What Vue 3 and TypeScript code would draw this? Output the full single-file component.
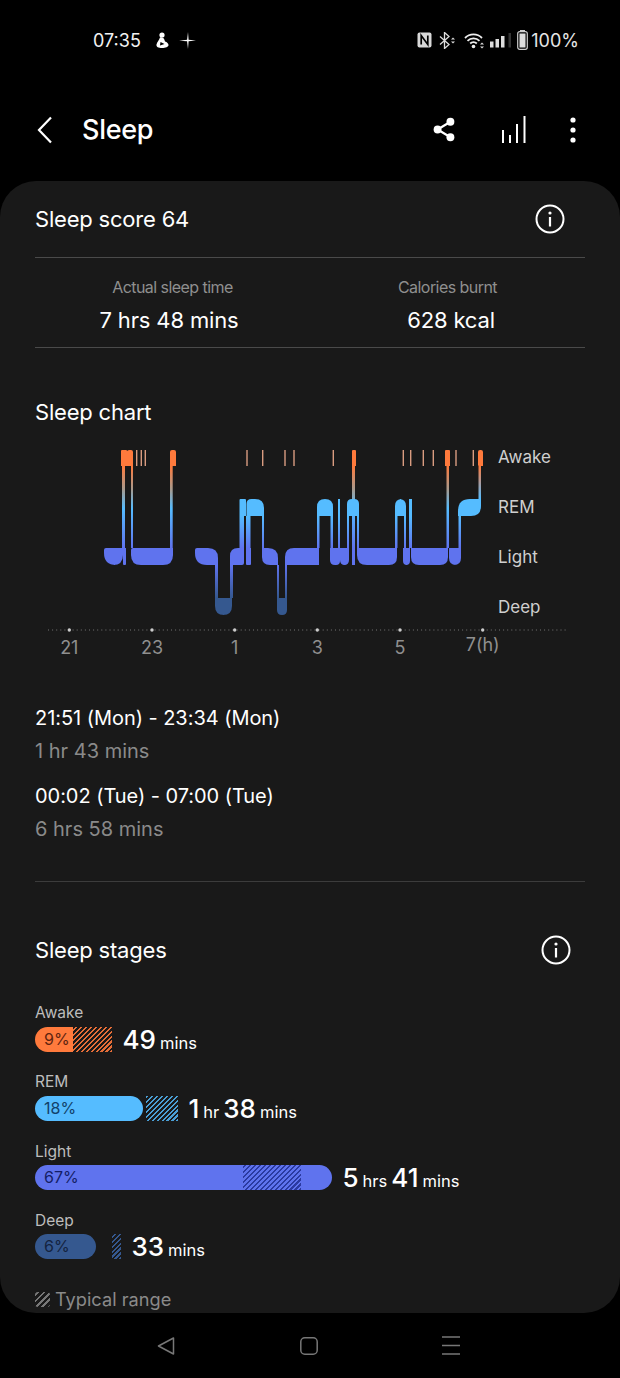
<script setup lang="ts">
type Stage = 'awake' | 'rem' | 'light' | 'deep'

const bands: Record<Stage, [number, number]> = {
  awake: [450, 466],
  rem: [499, 516],
  light: [548, 565],
  deep: [598, 615]
}

const stageColor: Record<Stage, string> = {
  awake: '#ff7a3c',
  rem: '#55bcff',
  light: '#5f73ee',
  deep: '#35588f'
}

// x, x2, stage, corner radii [tl, tr, br, bl]
const rawBlocks: [number, number, Stage, number[]][] = [
  [104, 123, 'light', [2, 0, 10, 12]],
  [123, 126, 'light', [0, 0, 1, 1]],
  [131, 173, 'light', [2, 0, 10, 10]],
  [195, 218, 'light', [2, 10, 0, 12]],
  [215, 232, 'deep', [0, 0, 9, 9]],
  [230, 244, 'light', [8, 0, 2, 0]],
  [246, 251, 'light', [0, 0, 1, 1]],
  [262, 278, 'light', [0, 10, 0, 8]],
  [277, 287, 'deep', [0, 0, 5, 5]],
  [285, 319, 'light', [9, 0, 0, 0]],
  [330, 340, 'light', [0, 0, 4, 5]],
  [340, 349, 'light', [0, 0, 5, 5]],
  [352, 355, 'light', [0, 0, 0, 0]],
  [357, 397, 'light', [0, 0, 8, 10]],
  [403, 410, 'light', [0, 0, 4, 4]],
  [411, 448, 'light', [0, 0, 8, 8]],
  [449, 461, 'light', [0, 0, 7, 7]],
  [239.5, 246, 'rem', [1, 1, 0, 0]],
  [246.5, 264, 'rem', [5, 9, 0, 0]],
  [317, 333, 'rem', [8, 8, 0, 0]],
  [338, 340, 'rem', [0, 0, 0, 0]],
  [347, 359, 'rem', [5, 5, 0, 0]],
  [395, 406, 'rem', [7, 7, 0, 0]],
  [409, 412, 'rem', [0, 0, 0, 0]],
  [458, 481, 'rem', [12, 0, 10, 0]],
  [121, 127, 'awake', [1, 1, 0, 0]],
  [126.5, 133, 'awake', [3, 2, 0, 0]],
  [170, 176, 'awake', [2, 2, 0, 0]],
  [352, 356, 'awake', [1, 1, 0, 0]],
  [445, 450, 'awake', [1, 1, 0, 0]],
  [478, 483, 'awake', [2, 2, 0, 1]]
]

function blockPath(x: number, x2: number, y: number, y2: number, r: number[]) {
  const [tl, tr, br, bl] = r
  return `M${x + tl} ${y}H${x2 - tr}Q${x2} ${y} ${x2} ${y + tr}V${y2 - br}Q${x2} ${y2} ${x2 - br} ${y2}H${x + bl}Q${x} ${y2} ${x} ${y2 - bl}V${y + tl}Q${x} ${y} ${x + tl} ${y}Z`
}

const blocks = rawBlocks.map(([x, x2, stage, r]) => ({
  d: blockPath(x, x2, bands[stage][0], bands[stage][1], r),
  fill: stageColor[stage]
}))

// x, x2, gradient name
const rawLinks: [number, number, string][] = [
  [122, 125, 'awakeLight'],
  [131, 133, 'awakeLight'],
  [170, 172.7, 'awakeLight'],
  [352, 355, 'awakeLight'],
  [446.5, 449, 'awakeLight'],
  [478.5, 481, 'awakeRem'],
  [239.5, 244, 'remLight'],
  [246, 250.5, 'remLight'],
  [262, 264, 'remLight'],
  [317, 319.5, 'remLight'],
  [330.5, 333, 'remLight'],
  [338, 340, 'remLight'],
  [347, 349, 'remLight'],
  [357, 359, 'remLight'],
  [395, 397.5, 'remLight'],
  [404, 406, 'remLight'],
  [409, 412, 'remLight'],
  [458.5, 461, 'remLight'],
  [215, 218, 'lightDeep'],
  [230, 233, 'lightDeep'],
  [277, 279, 'lightDeep'],
  [285, 287, 'lightDeep']
]

const linkSpan: Record<string, [number, number]> = {
  awakeLight: [466, 548],
  awakeRem: [466, 499],
  remLight: [516, 548],
  lightDeep: [565, 598]
}

const links = rawLinks.map(([x, x2, name]) => ({
  x,
  width: x2 - x,
  y: linkSpan[name][0],
  height: linkSpan[name][1] - linkSpan[name][0],
  fill: `url(#${name})`
}))

const ticks = [136.7, 141.3, 145.3, 247, 262.7, 285, 294, 333.3, 403.3, 410.7, 423.3, 433.3, 456, 473.3]

const stageLabels = [
  { text: 'Awake', y: 457 },
  { text: 'REM', y: 507 },
  { text: 'Light', y: 557 },
  { text: 'Deep', y: 607 }
]

const axis = [
  { x: 69.3, y: 654, text: '21' },
  { x: 152, y: 654, text: '23' },
  { x: 234.7, y: 654, text: '1' },
  { x: 317.3, y: 654, text: '3' },
  { x: 400, y: 654, text: '5' },
  { x: 482.7, y: 651, text: '7(h)' }
]

const sessions = [
  { range: '21:51 (Mon) - 23:34 (Mon)', length: '1 hr 43 mins' },
  { range: '00:02 (Tue) - 07:00 (Tue)', length: '6 hrs 58 mins' }
]

interface Row {
  name: string
  cls: string
  pct: string
  fill: number
  hatchAt: number
  hatch: number
  value: [string, string][]
}

const rows: Row[] = [
  { name: 'Awake', cls: 'awake', pct: '9%', fill: 38, hatchAt: 38, hatch: 39, value: [['49', 'mins']] },
  { name: 'REM', cls: 'rem', pct: '18%', fill: 108, hatchAt: 111, hatch: 32, value: [['1', 'hr'], ['38', 'mins']] },
  { name: 'Light', cls: 'light', pct: '67%', fill: 297, hatchAt: 208, hatch: 58, value: [['5', 'hrs'], ['41', 'mins']] },
  { name: 'Deep', cls: 'deep', pct: '6%', fill: 61, hatchAt: 77, hatch: 9, value: [['33', 'mins']] }
]
</script>

<template>
  <div class="phone">
    <div class="status">
      <div class="status-left">
        <span class="clock">07:35</span>
        <svg class="glyph" width="13" height="16" viewBox="0 0 13 16">
          <circle cx="6" cy="3" r="2.600" fill="#fff" />
          <path d="M4 5.500c2-.5 4 .5 4.500 2.500l.5 1.500c2 .5 3.500 2 3.500 3.500 0 2-3 3-6.500 3S0 15 .5 12.500C1 10 3 8.500 4 5.500z" fill="#fff" />
          <path d="M4.500 10l4 2-4.500 1.500z" fill="#000" />
        </svg>
        <svg class="glyph spark" width="17" height="17" viewBox="0 0 17 17">
          <path d="M9 0l.6 7.800 7.400.7-7.400.7L9 17l-.9-7.800L0 8.700l8.100-.9z" fill="#fff" />
        </svg>
      </div>
      <div class="status-right">
        <svg width="15" height="16" viewBox="0 0 15 16">
          <rect x="0.500" y="0.500" width="14" height="15" rx="2" fill="#d8d8d8" />
          <path d="M4.200 12.500V3.500L10.800 12.500V3.500" fill="none" stroke="#000" stroke-width="1.700" />
        </svg>
        <svg class="bt" width="16" height="17" viewBox="0 0 16 17">
          <path d="M1 4.500l9 8-4.500 4V.5l4.500 4-9 8" fill="none" stroke="#ddd" stroke-width="1.300" />
          <path d="M12 7.500h4l-2-2zM12 9.500h4l-2 2z" fill="#ddd" />
        </svg>
        <svg class="wifi" width="21" height="17" viewBox="0 0 21 17">
          <path d="M1 6a12 12 0 0 1 17 0M3.500 8.800a8.500 8.500 0 0 1 12 0M6.200 11.500a4.600 4.600 0 0 1 6.600 0" fill="none" stroke="#eee" stroke-width="1.800" />
          <circle cx="9.500" cy="14.500" r="1.800" fill="#eee" />
          <path d="M16 12.500h4l-2-2zM16 14.500h4l-2 2z" fill="#ddd" />
        </svg>
        <svg class="signal" width="21" height="15" viewBox="0 0 21 15">
          <rect x="0" y="8.500" width="3.500" height="6" fill="#ddd" />
          <rect x="5.500" y="6" width="3.500" height="8.500" fill="#ddd" />
          <rect x="11" y="3" width="3.500" height="11.500" fill="#ddd" />
          <rect x="18.500" y="0" width="2.500" height="14.500" fill="#333" />
        </svg>
        <svg class="battery" width="11" height="20" viewBox="0 0 11 20">
          <rect x="3" y="0" width="5" height="2" fill="#ccc" />
          <rect x="0.700" y="1.700" width="9.600" height="17.600" rx="2" fill="none" stroke="#ccc" stroke-width="1.200" />
          <rect x="2.500" y="3.500" width="6" height="14" fill="#ddd" />
        </svg>
        <span class="battery-text">100%</span>
      </div>
    </div>

    <header class="topbar">
      <svg class="back" width="16" height="28" viewBox="0 0 16 28">
        <path d="M14 1.500L2 14l12 12.500" fill="none" stroke="#fff" stroke-width="2.200" />
      </svg>
      <h1>Sleep</h1>
      <div class="actions">
        <svg class="share" width="22" height="25" viewBox="0 0 24 26">
          <path d="M19 4.500L5 13l14 8.500" fill="none" stroke="#fff" stroke-width="2.400" />
          <circle cx="19" cy="4.500" r="4.300" fill="#fff" />
          <circle cx="5" cy="13" r="4.300" fill="#fff" />
          <circle cx="19" cy="21.500" r="4.300" fill="#fff" />
        </svg>
        <svg class="bars" width="24" height="27" viewBox="0 0 24 27">
          <path d="M1 27V14M8 27V19M15 27V8M22.500 27V0" stroke="#fff" stroke-width="2" fill="none" />
        </svg>
        <svg width="6" height="26" viewBox="0 0 6 26">
          <circle cx="3" cy="3" r="2.600" fill="#fff" />
          <circle cx="3" cy="13" r="2.600" fill="#fff" />
          <circle cx="3" cy="23" r="2.600" fill="#fff" />
        </svg>
      </div>
    </header>

    <main class="card">
      <section class="score">
        <h2>Sleep score 64</h2>
        <svg class="info" width="30" height="30" viewBox="0 0 30 30">
          <circle cx="15" cy="15" r="13.500" fill="none" stroke="#fff" stroke-width="2" />
          <circle cx="15" cy="9" r="1.600" fill="#fff" />
          <path d="M15 13v9.500" stroke="#fff" stroke-width="2.200" />
        </svg>
      </section>

      <section class="stats">
        <div class="stat">
          <span class="stat-label">Actual sleep time</span>
          <span class="stat-value">7 hrs 48 mins</span>
        </div>
        <div class="stat">
          <span class="stat-label">Calories burnt</span>
          <span class="stat-value">628 kcal</span>
        </div>
      </section>

      <h2 class="chart-title">Sleep chart</h2>

      <svg class="chart" width="620" height="225" viewBox="0 435 620 225">
        <defs>
          <linearGradient id="awakeLight" gradientUnits="userSpaceOnUse" x1="0" y1="466" x2="0" y2="548">
            <stop offset="0" stop-color="#ff7a3c" />
            <stop offset="0.28" stop-color="#a99a8c" />
            <stop offset="0.52" stop-color="#55bcff" />
            <stop offset="1" stop-color="#5f73ee" />
          </linearGradient>
          <linearGradient id="awakeRem" gradientUnits="userSpaceOnUse" x1="0" y1="466" x2="0" y2="499">
            <stop offset="0" stop-color="#ff7a3c" />
            <stop offset="1" stop-color="#55bcff" />
          </linearGradient>
          <linearGradient id="remLight" gradientUnits="userSpaceOnUse" x1="0" y1="516" x2="0" y2="548">
            <stop offset="0" stop-color="#55bcff" />
            <stop offset="1" stop-color="#5f73ee" />
          </linearGradient>
          <linearGradient id="lightDeep" gradientUnits="userSpaceOnUse" x1="0" y1="565" x2="0" y2="598">
            <stop offset="0" stop-color="#5f73ee" />
            <stop offset="1" stop-color="#35588f" />
          </linearGradient>
        </defs>

        <rect v-for="t in ticks" :key="t" :x="t - 0.7" y="450" width="1.400" height="16" fill="#d99c80" />
        <rect v-for="(l, i) in links" :key="i" :x="l.x" :y="l.y" :width="l.width" :height="l.height" :fill="l.fill" />
        <path v-for="(b, i) in blocks" :key="i" :d="b.d" :fill="b.fill" />

        <line x1="48" y1="630" x2="568" y2="630" stroke="#777" stroke-width="1" stroke-dasharray="1 3.100" />
        <template v-for="a in axis" :key="a.x">
          <circle :cx="a.x" cy="630" r="1.700" fill="#ccc" />
          <text :x="a.x" :y="a.y" text-anchor="middle" class="axis-text">{{ a.text }}</text>
        </template>
        <text v-for="s in stageLabels" :key="s.text" x="498" :y="s.y + 6" class="stage-text">{{ s.text }}</text>
      </svg>

      <section class="sessions">
        <div v-for="s in sessions" :key="s.range" class="session">
          <div class="range">{{ s.range }}</div>
          <div class="length">{{ s.length }}</div>
        </div>
      </section>

      <section class="stages">
        <div class="stages-head">
          <h2>Sleep stages</h2>
          <svg class="info" width="30" height="30" viewBox="0 0 30 30">
            <circle cx="15" cy="15" r="13.500" fill="none" stroke="#fff" stroke-width="2" />
            <circle cx="15" cy="9" r="1.600" fill="#fff" />
            <path d="M15 13v9.500" stroke="#fff" stroke-width="2.200" />
          </svg>
        </div>

        <div v-for="r in rows" :key="r.name" class="row" :class="r.cls">
          <div class="row-name">{{ r.name }}</div>
          <div class="row-line">
            <div class="track" :style="{ width: Math.max(r.fill, r.hatchAt + r.hatch) + 'px' }">
              <div class="fill" :style="{ width: r.fill + 'px' }">{{ r.pct }}</div>
              <div class="hatch" :style="{ left: r.hatchAt + 'px', width: r.hatch + 'px' }"></div>
            </div>
            <div class="value">
              <template v-for="v in r.value" :key="v[1]">
                <b>{{ v[0] }}</b><span>{{ v[1] }}</span>
              </template>
            </div>
          </div>
        </div>

        <div class="legend">
          <span class="legend-mark"></span>
          <span>Typical range</span>
        </div>
      </section>
    </main>

    <nav class="navbar">
      <svg width="18" height="18" viewBox="0 0 18 18">
        <path d="M16.500 1L1.500 9l15 8z" fill="none" stroke="#777" stroke-width="1.500" stroke-linejoin="round" />
      </svg>
      <svg width="18" height="18" viewBox="0 0 18 18">
        <rect x="0.800" y="0.800" width="16.400" height="16.400" rx="4" fill="none" stroke="#777" stroke-width="1.500" />
      </svg>
      <svg width="18" height="19" viewBox="0 0 18 19">
        <path d="M0 1h18M0 9.500h18M0 18h18" stroke="#777" stroke-width="1.500" />
      </svg>
    </nav>
  </div>
</template>

<style>
html,
body {
  margin: 0;
  background: #000;
}
</style>

<style scoped>
.phone {
  width: 620px;
  height: 1378px;
  overflow: hidden;
  background: #000;
  color: #fff;
  font-family: Inter, 'Noto Sans', sans-serif;
  display: flex;
  flex-direction: column;
}

.status {
  height: 80px;
  flex: none;
  padding: 0 41px 0 93px;
  box-sizing: border-box;
  display: flex;
  align-items: center;
  justify-content: space-between;
}

.status-left,
.status-right {
  display: flex;
  align-items: center;
}

.clock {
  font-size: 18px;
  color: #f2f2f2;
}

.glyph {
  margin-left: 15px;
}

.spark {
  margin-left: 10px;
}

.bt {
  margin-left: 7px;
}

.wifi {
  margin-left: 9px;
}

.signal {
  margin-left: 5px;
}

.battery {
  margin-left: 6px;
}

.battery-text {
  font-size: 18px;
  color: #e6e6e6;
  margin-left: 3px;
}

.topbar {
  height: 101px;
  flex: none;
  display: flex;
  align-items: center;
  padding: 0 44px 2px 37px;
  box-sizing: border-box;
}

.back {
  margin-right: 29px;
}

h1 {
  margin: 0;
  font-size: 27px;
  font-weight: 500;
  letter-spacing: -0.3px;
}

.actions {
  margin-left: auto;
  display: flex;
  align-items: center;
}

.share {
  margin-right: 47px;
}

.bars {
  margin-right: 44px;
}

.card {
  height: 1132px;
  flex: none;
  background: #191919;
  border-radius: 36px;
  overflow: hidden;
}

h2 {
  margin: 0;
  font-size: 22px;
  font-weight: 400;
  letter-spacing: -0.2px;
}

.score {
  height: 76px;
  margin: 0 35px;
  display: flex;
  align-items: center;
  justify-content: space-between;
  padding: 0 20px 0 0;
  border-bottom: 1px solid #4a4a4a;
}

.stats {
  height: 89px;
  margin: 0 35px;
  border-bottom: 1px solid #4a4a4a;
  display: grid;
  grid-template-columns: 1fr 1fr;
  align-items: center;
}

.stat {
  display: flex;
  flex-direction: column;
  align-items: center;
  gap: 10px;
  padding-top: 5px;
}

.stat-label {
  font-size: 16px;
  letter-spacing: -0.55px;
  color: #8f8f8f;
}

.stat-value {
  font-size: 22px;
  letter-spacing: -0.15px;
}

.stat:first-child .stat-value {
  margin-right: 7px;
}

.stat:last-child .stat-value {
  margin-left: 7px;
}

.chart-title {
  margin: 50px 35px 0;
  line-height: 28px;
}

.chart {
  display: block;
  margin-top: 9px;
}

.axis-text {
  font-size: 18px;
  fill: #8f8f8f;
}

.stage-text {
  font-size: 17px;
  fill: #cfcfcf;
}

.sessions {
  margin: 42px 35px 0;
  padding-bottom: 35px;
  border-bottom: 1px solid #3c3c3c;
  display: flex;
  flex-direction: column;
  gap: 12px;
}

.range {
  font-size: 20px;
  letter-spacing: -0.05px;
  line-height: 33px;
}

.length {
  font-size: 20px;
  line-height: 33px;
  color: #8a8a8a;
}

.stages {
  padding: 53px 35px 0;
}

.stages-head {
  display: flex;
  align-items: center;
  justify-content: space-between;
  padding-right: 14px;
  margin-bottom: 36px;
}

.row {
  margin-bottom: 13.800px;
  --c: #fff;
  --ink: #000;
  --stripe: #fff;
}

.row.awake {
  --c: #ff7a3c;
  --ink: #5e2410;
  --stripe: #e66e38;
}

.row.rem {
  --c: #55bcff;
  --ink: #12416a;
  --stripe: #4a9fd6;
}

.row.light {
  --c: #5f73ee;
  --ink: #141e66;
  --stripe: #2b3aa0;
}

.row.deep {
  --c: #35588f;
  --ink: #14233f;
  --stripe: #35588f;
}

.row-name {
  font-size: 15.500px;
  line-height: 24px;
  color: #bdbdbd;
}

.row-line {
  display: flex;
  align-items: center;
  gap: 10.500px;
  height: 35px;
  margin-top: -3.500px;
}

.track {
  position: relative;
  height: 25px;
}

.fill {
  height: 100%;
  background: var(--c);
  border-radius: 13px;
  color: var(--ink);
  font-size: 16px;
  line-height: 25px;
  padding-left: 9px;
  box-sizing: border-box;
}

.awake .fill {
  border-radius: 13px 0 0 13px;
}

.hatch {
  position: absolute;
  top: 0;
  bottom: 0;
  background: repeating-linear-gradient(-45deg, var(--stripe) 0 1.500px, transparent 1.500px 3.500px);
}

.value {
  display: flex;
  align-items: baseline;
  white-space: nowrap;
}

.value b {
  font-size: 26px;
  font-weight: 500;
  margin-right: 4px;
}

.value span {
  font-size: 16.500px;
  margin-right: 4px;
}

.legend {
  display: flex;
  align-items: center;
  gap: 5px;
  margin-top: 24px;
  font-size: 18.200px;
  color: #8a8a8a;
}

.legend-mark {
  width: 15px;
  height: 15px;
  border-radius: 3px;
  background: repeating-linear-gradient(-45deg, #777 0 2px, transparent 2px 4.500px);
}

.navbar {
  flex: 1;
  display: flex;
  align-items: center;
  padding: 0 160px 0 157px;
  justify-content: space-between;
}
</style>
